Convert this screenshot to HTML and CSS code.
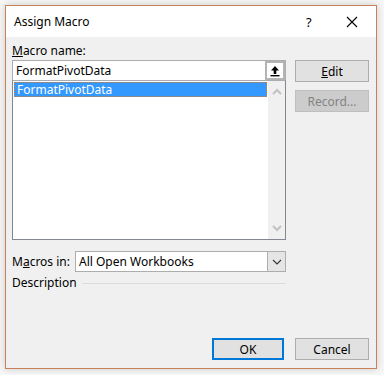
FILE: index.html
```html
<!DOCTYPE html>
<html lang="en">
<head>
    <meta charset="UTF-8">
    <title>Assign Macro</title>
    <link rel="stylesheet" href="styles.css">
</head>
<body>
    <div class="dialog">
        <div class="titlebar">
            <span class="title">Assign Macro</span>
            <span class="help">?</span>
            <svg class="close" width="12" height="12" viewBox="0 0 12 12">
                <path d="M1 1 L11 11 M11 1 L1 11" stroke="#000" stroke-width="1.1" fill="none"/>
            </svg>
        </div>

        <div class="content">
            <div class="left">
                <div class="label"><u>M</u>acro name:</div>
                <div class="name-box">
                    <span class="name-text">FormatPivotData</span>
                    <span class="collapse-btn">
                        <svg width="14" height="14" viewBox="0 0 14 14">
                            <path d="M7 2 L11 6.5 L8.3 6.5 L8.3 10 L5.7 10 L5.7 6.5 L3 6.5 Z" fill="#000"/>
                            <rect x="2.5" y="11" width="9" height="1.4" fill="#000"/>
                        </svg>
                    </span>
                </div>
                <div class="listbox">
                    <div class="items">
                        <div class="item selected">FormatPivotData</div>
                    </div>
                    <div class="scrollbar">
                        <svg width="10" height="8" viewBox="0 0 10 8">
                            <path d="M1 6 L5 2 L9 6" stroke="#c2c2c2" stroke-width="2" fill="none"/>
                        </svg>
                        <svg width="10" height="8" viewBox="0 0 10 8">
                            <path d="M1 2 L5 6 L9 2" stroke="#c2c2c2" stroke-width="2" fill="none"/>
                        </svg>
                    </div>
                </div>
                <div class="macros-in">
                    <span class="label">M<u>a</u>cros in:</span>
                    <div class="combo">
                        <span class="combo-text">All Open Workbooks</span>
                        <span class="combo-btn">
                            <svg width="10" height="6" viewBox="0 0 10 6">
                                <path d="M1 1 L5 5 L9 1" stroke="#333" stroke-width="1.1" fill="none"/>
                            </svg>
                        </span>
                    </div>
                </div>
                <div class="description">
                    <span class="label">Description</span>
                    <span class="rule"></span>
                </div>
            </div>

            <div class="right">
                <button class="btn"><u>E</u>dit</button>
                <button class="btn disabled">Record...</button>
            </div>
        </div>

        <div class="footer">
            <button class="btn default">OK</button>
            <button class="btn">Cancel</button>
        </div>
    </div>
</body>
</html>
```

FILE: styles.css
```css
body {
    margin: 0;
    padding: 5px;
    background: #f7f7f7;
    font-family: 'Noto Sans', 'Open Sans', sans-serif;
    font-size: 12px;
    color: #000;
}

.dialog {
    width: 372px;
    height: 364px;
    box-sizing: border-box;
    border: 1px solid #c8825a;
    background: #f0f0f0;
    display: flex;
    flex-direction: column;
    box-shadow: 0 0 8px rgba(0, 0, 0, 0.18);
}

.titlebar {
    height: 31px;
    background: #fff;
    display: flex;
    align-items: center;
    padding-left: 8px;
}

.title {
    flex: 1;
}

.help {
    width: 14px;
    margin-right: 26px;
    font-size: 13px;
}

.close {
    margin-right: 18px;
}

.content {
    display: flex;
    padding: 5px 7px 0 6px;
    gap: 9px;
}

.left {
    width: 274px;
    display: flex;
    flex-direction: column;
}

.label {
    line-height: 18px;
    height: 18px;
}

.name-box {
    height: 21px;
    box-sizing: border-box;
    border: 1px solid #abadb3;
    background: #fff;
    display: flex;
    align-items: center;
}

.name-text {
    flex: 1;
    padding-left: 3px;
}

.collapse-btn {
    width: 20px;
    height: 19px;
    box-sizing: border-box;
    border: 2px solid #b4b4b4;
    background: #fff;
    display: flex;
    align-items: center;
    justify-content: center;
}

.listbox {
    height: 160px;
    box-sizing: border-box;
    border: 1px solid #828790;
    border-top-color: #abadb3;
    background: #fff;
    margin-top: -1px;
    display: flex;
}

.items {
    flex: 1;
    padding: 1px;
}

.item {
    height: 15px;
    line-height: 14px;
    padding-left: 2px;
    box-sizing: border-box;
}

.item.selected {
    background: #3399ff;
    color: #fff;
    border: 1px dotted #e07b21;
}

.scrollbar {
    width: 17px;
    background: #f0f0f0;
    display: flex;
    flex-direction: column;
    justify-content: space-between;
    align-items: center;
    padding: 7px 0 7px;
}

.macros-in {
    display: flex;
    align-items: center;
    margin-top: 11px;
    height: 21px;
}

.macros-in .label {
    width: 63px;
}

.combo {
    flex: 1;
    height: 21px;
    box-sizing: border-box;
    border: 1px solid #adadad;
    background: #fff;
    display: flex;
    align-items: center;
}

.combo-text {
    flex: 1;
    padding-left: 3px;
}

.combo-btn {
    width: 17px;
    height: 19px;
    border-left: 1px solid #adadad;
    background: #e5e5e5;
    display: flex;
    align-items: center;
    justify-content: center;
}

.description {
    display: flex;
    align-items: center;
    margin-top: 2px;
}

.rule {
    flex: 1;
    border-top: 1px solid #dcdcdc;
    margin-left: 5px;
}

.right {
    width: 74px;
    display: flex;
    flex-direction: column;
    gap: 8px;
    padding-top: 18px;
}

.btn {
    height: 22px;
    width: 74px;
    box-sizing: border-box;
    border: 1px solid #adadad;
    background: #e1e1e1;
    font-family: inherit;
    font-size: 12px;
    color: #000;
    padding: 0;
}

.btn.disabled {
    background: #cccccc;
    border-color: #bfbfbf;
    color: #838383;
}

.btn.default {
    width: 72px;
    border: 2px solid #0078d7;
}

.footer {
    margin-top: auto;
    display: flex;
    justify-content: flex-end;
    gap: 11px;
    padding: 0 7px 8px 0;
}
```
